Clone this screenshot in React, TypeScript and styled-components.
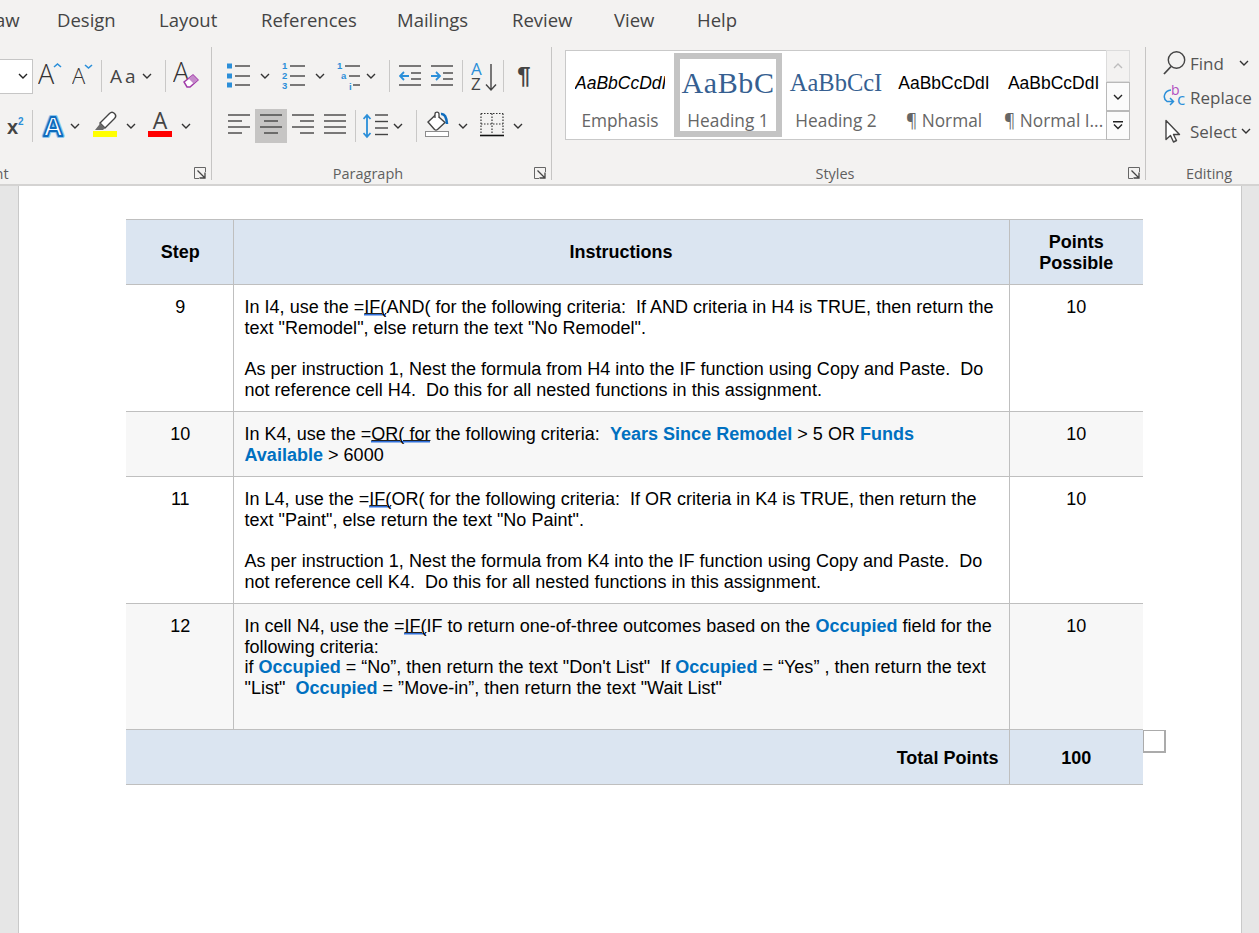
import React from 'react'
import styled, { createGlobalStyle } from 'styled-components'

const GlobalStyle = createGlobalStyle`
  html, body {
    margin: 0;
    padding: 0;
    height: 100%;
    overflow: hidden;
    background: #e6e6e6;
  }
  * { box-sizing: border-box; }
`

const Screen = styled.div`
  display: flex;
  flex-direction: column;
  width: 1259px;
  height: 933px;
  overflow: hidden;
  font-family: "Open Sans", "Noto Sans", sans-serif;
`

const Ribbon = styled.header`
  flex: none;
  height: 186px;
  background: #f3f2f1;
  border-bottom: 2px solid #d4d3d2;
`

const TabBar = styled.nav`
  display: flex;
  height: 47px;
  margin-left: -26px;
  font-size: 18.5px;
  line-height: 39px;
  color: #444;
`

const Tab = styled.span<{ $w: number }>`
  flex: 0 0 ${p => p.$w}px;
`

const Groups = styled.div`
  display: flex;
  height: 133px;
`

const Group = styled.section<{ $w?: number; $last?: boolean }>`
  display: flex;
  flex-direction: column;
  flex: ${p => (p.$w ? `0 0 ${p.$w}px` : '1')};
  border-right: ${p => (p.$last ? 'none' : '1px solid #c6c5c4')};
`

const Rows = styled.div`
  display: flex;
  flex-direction: column;
  flex: 1;
  gap: 16px;
  padding-top: 12px;
`

const Row = styled.div`
  display: flex;
  align-items: center;
  height: 34px;
`

const Slot = styled.div<{ $w: number; $ml?: number; $active?: boolean }>`
  display: flex;
  flex: 0 0 ${p => p.$w}px;
  align-items: center;
  justify-content: center;
  height: 34px;
  margin-left: ${p => p.$ml ?? 0}px;
  background: ${p => (p.$active ? '#c6c5c4' : 'transparent')};
  color: #444;
`

const Divider = styled.div<{ $ml: number }>`
  flex: 0 0 1px;
  height: 32px;
  margin-left: ${p => p.$ml}px;
  background: #c9c8c7;
`

const SizeBox = styled.div`
  display: flex;
  flex: 0 0 33px;
  align-items: center;
  justify-content: flex-end;
  height: 35px;
  padding-right: 4px;
  background: #fff;
  border: 1px solid #c6c6c6;
  border-left: none;
`

const CaseText = styled.span`
  font-size: 19px;
  letter-spacing: 3px;
  white-space: nowrap;
  color: #444;
`

const Pilcrow = styled.span`
  font-family: "Liberation Sans", sans-serif;
  font-size: 24px;
  font-weight: 700;
  color: #444;
`

const LabelRow = styled.div<{ $pl?: number }>`
  display: flex;
  align-items: center;
  height: 18px;
  margin-bottom: -2px;
  padding-left: ${p => p.$pl ?? 0}px;
`

const GroupLabel = styled.div<{ $ml?: number }>`
  flex: 1;
  margin-left: ${p => p.$ml ?? 0}px;
  padding-top: 2px;
  font-size: 14.5px;
  line-height: 18px;
  text-align: center;
  white-space: nowrap;
  color: #5f5f5f;
`

const Launcher = styled.div`
  display: flex;
  flex: 0 0 12px;
  margin: 0 5px 0 10px;
`

const StyleArea = styled.div`
  display: flex;
  flex: 1;
  align-items: flex-start;
  padding: 3px 0 0 13px;
`

const Gallery = styled.div`
  display: flex;
  width: 542px;
  height: 90px;
  padding: 2px 0;
  background: #fff;
  border: 1px solid #c9c9c9;
`

const StyleItem = styled.div<{ $selected?: boolean }>`
  display: flex;
  flex: 0 0 108px;
  flex-direction: column;
  align-items: center;
  border: 6px solid ${p => (p.$selected ? '#c4c4c4' : 'transparent')};
`

const Preview = styled.div<{ $kind: 'emphasis' | 'h1' | 'h2' | 'normal' }>`
  display: flex;
  flex: none;
  align-items: center;
  justify-content: ${p => (p.$kind === 'emphasis' ? 'flex-start' : 'center')};
  width: ${p => (p.$kind === 'emphasis' ? 90 : 96)}px;
  height: 48px;
  overflow: hidden;
  white-space: nowrap;
  color: ${p => (p.$kind === 'h1' || p.$kind === 'h2' ? '#365f91' : '#000')};
  font-family: ${p => (p.$kind === 'h1' || p.$kind === 'h2' ? '"Liberation Serif", serif' : '"Liberation Sans", sans-serif')};
  font-style: ${p => (p.$kind === 'emphasis' ? 'italic' : 'normal')};
  font-size: ${p => (p.$kind === 'h1' ? 30 : p.$kind === 'h2' ? 24.5 : 17.5)}px;
  letter-spacing: ${p => (p.$kind === 'h1' ? '0.6px' : '0')};
`

const StyleName = styled.div`
  flex: none;
  margin-top: 3px;
  font-size: 17.3px;
  line-height: 22px;
  white-space: nowrap;
  color: #666;
`

const Scroller = styled.div`
  display: flex;
  flex: 0 0 23px;
  flex-direction: column;
  height: 90px;
`

const ScrollButton = styled.div<{ $h: number; $muted?: boolean }>`
  display: flex;
  flex: 0 0 ${p => p.$h}px;
  align-items: center;
  justify-content: center;
  margin-left: -1px;
  background: ${p => (p.$muted ? '#f3f2f1' : '#fbfbfb')};
  border: 1px solid ${p => (p.$muted ? '#dcdcdc' : '#b9b9b9')};
`

const EditList = styled.div`
  display: flex;
  flex: 1;
  flex-direction: column;
  padding-left: 17px;
`

const EditRow = styled.div<{ $h: number }>`
  display: flex;
  align-items: center;
  gap: 4px;
  height: ${p => p.$h}px;
  font-size: 17px;
  color: #555;
`

const EditChevron = styled.span<{ $ml: number }>`
  display: flex;
  margin-left: ${p => p.$ml}px;
`

const DocArea = styled.main`
  flex: 1;
  padding: 0 17px 0 18px;
  background: #e6e6e6;
  overflow: hidden;
`

const Page = styled.div`
  height: 100%;
  padding: 33px 0 0 107px;
  background: #fff;
  border-left: 1px solid #c9c9c9;
  border-right: 1px solid #c9c9c9;
`

const TableWrap = styled.div`
  position: relative;
  width: 1017px;
`

const Table = styled.table`
  width: 1017px;
  table-layout: fixed;
  border-collapse: collapse;
  font-family: "Liberation Sans", Arial, sans-serif;
  font-size: 18px;
  line-height: 20.7px;
  letter-spacing: 0.015px;
  color: #000;
`

const Head = styled.tr<{ $h: number }>`
  height: ${p => p.$h}px;
  background: #dbe5f1;
`

const BodyRow = styled.tr<{ $h: number; $alt?: boolean }>`
  height: ${p => p.$h}px;
  background: ${p => (p.$alt ? '#f7f7f7' : '#fff')};
`

const Cell = styled.td`
  padding: 12px 15px 0 11px;
  border-top: 1px solid #bfbfbf;
  border-bottom: 1px solid #bfbfbf;
  border-left: 1px solid #bfbfbf;
  vertical-align: top;
  white-space: pre-wrap;
`

const NumberCell = styled(Cell)`
  padding: 12px 0 0;
  text-align: center;
  &:first-child {
    padding-left: 2px;
    border-left: none;
  }
`

const HeadCell = styled.th<{ $right?: boolean; $pt?: number }>`
  padding: ${p => p.$pt ?? 1}px ${p => (p.$right ? 10 : 0)}px 0 0;
  border-top: 1px solid #bfbfbf;
  border-bottom: 1px solid #bfbfbf;
  border-left: 1px solid #bfbfbf;
  font-weight: 700;
  vertical-align: middle;
  text-align: ${p => (p.$right ? 'right' : 'center')};
  &:first-child {
    padding-left: ${p => (p.$right ? 0 : 2)}px;
    border-left: none;
  }
`

const Field = styled.b`
  color: #0070c0;
`

const Flagged = styled.span`
  text-decoration: underline #222 1px;
  text-underline-offset: 0;
  background: linear-gradient(#2f6fdb, #2f6fdb) no-repeat 0 calc(100% - 2px) / 100% 1.5px;
`

const RowHandle = styled.div`
  position: absolute;
  right: -23px;
  bottom: 32px;
  width: 23px;
  height: 23px;
  background: #fff;
  border: 2px solid #ababab;
  border-width: 1px 2px 2px 1px;
`

const DARK = '#444'
const BLUE = '#2b8fd9'

const Chevron = ({ color = '#333' }: { color?: string }) => (
  <svg width="10" height="6" viewBox="0 0 10 6">
    <path d="M1 1l4 4 4-4" fill="none" stroke={color} strokeWidth="1.4" />
  </svg>
)

const Chev = ({ ml }: { ml: number }) => (
  <Slot $w={10} $ml={ml}>
    <Chevron />
  </Slot>
)

const Lines = ({ rows }: { rows: [number, number, number][] }) => (
  <>
    {rows.map(([x1, x2, y]) => (
      <line key={`${x1}-${y}`} x1={x1} x2={x2} y1={y} y2={y} stroke={DARK} strokeWidth="1.4" />
    ))}
  </>
)

const Draw = ({ w, children }: { w: number; children: React.ReactNode }) => (
  <svg width={w} height={34} viewBox={`0 0 ${w} 34`}>
    {children}
  </svg>
)

const GrowA = () => (
  <Draw w={24}>
    <text x="0" y="25" fontFamily="Open Sans" fontSize="27" fontWeight="300" fill="#333">A</text>
    <path d="M16 8l3.500-3 3.500 3" fill="none" stroke={BLUE} strokeWidth="1.6" />
  </Draw>
)

const ShrinkA = () => (
  <Draw w={22}>
    <text x="0" y="25" fontFamily="Open Sans" fontSize="22" fontWeight="300" fill="#333">A</text>
    <path d="M13 6l3.500 3 3.500-3" fill="none" stroke={BLUE} strokeWidth="1.6" />
  </Draw>
)

const ClearFormat = () => (
  <Draw w={26}>
    <text x="0" y="23" fontFamily="Open Sans" fontSize="27" fontWeight="300" fill="#333">A</text>
    <path d="M11 23l9-7 5 5-8 7h-3z" fill="#fff" stroke="#a03aa8" strokeWidth="1.5" />
    <path d="M15.500 19.500l5 5 4.500-3.500-5-5z" fill="#c58acb" />
  </Draw>
)

const Superscript = () => (
  <Draw w={17}>
    <text x="0" y="25" fontFamily="Liberation Sans" fontSize="20" fontWeight="700" fill={DARK}>x</text>
    <text x="11" y="16" fontFamily="Liberation Sans" fontSize="10" fontWeight="700" fill={BLUE}>2</text>
  </Draw>
)

const TextEffect = () => (
  <Draw w={24}>
    <text x="12" y="27" textAnchor="middle" fontFamily="Liberation Sans" fontSize="28" fontWeight="700" fill="#fff" stroke="#8cc4ec" strokeWidth="4" strokeLinejoin="round">A</text>
    <text x="12" y="27" textAnchor="middle" fontFamily="Liberation Sans" fontSize="28" fontWeight="700" fill="#fff" stroke="#0f6cbd" strokeWidth="1.8" strokeLinejoin="round">A</text>
  </Draw>
)

const Highlighter = () => (
  <Draw w={24}>
    <rect x="0" y="22" width="24" height="6" fill="#ffff00" />
    <path d="M7 14l9.500-9.500c1.500-1.500 3.500-1.500 5 0s1.500 3.500 0 5L12 19z" fill="#fff" stroke={DARK} strokeWidth="1.4" />
    <path d="M7 14l5 5-2 2H2l4-5z" fill="#6b6b6b" />
  </Draw>
)

const FontColor = () => (
  <Draw w={24}>
    <text x="12" y="20" textAnchor="middle" fontFamily="Open Sans" fontSize="23" fill={DARK}>A</text>
    <rect x="0" y="22" width="24" height="6" fill="#ff0000" />
  </Draw>
)

const Bullets = () => (
  <Draw w={24}>
    {[7, 17, 26].map(y => (
      <rect key={y} x="0" y={y - 2.5} width="5" height="5" fill={BLUE} />
    ))}
    <Lines rows={[[8, 23, 7], [8, 23, 17], [8, 23, 26]]} />
  </Draw>
)

const Marker = ({ x, y, children }: { x: number; y: number; children: string }) => (
  <text x={x} y={y} fontFamily="Liberation Sans" fontSize="9.500" fontWeight="700" fill={BLUE}>{children}</text>
)

const Numbered = () => (
  <Draw w={24}>
    <Marker x={0} y={10}>1</Marker>
    <Marker x={0} y={20}>2</Marker>
    <Marker x={0} y={30}>3</Marker>
    <Lines rows={[[8, 23, 7], [8, 23, 17], [8, 23, 26]]} />
  </Draw>
)

const Multilevel = () => (
  <Draw w={24}>
    <Marker x={0} y={10}>1</Marker>
    <Marker x={4} y={20}>a</Marker>
    <Marker x={12} y={31}>i</Marker>
    <Lines rows={[[8, 23, 7], [12, 23, 17], [16, 23, 26]]} />
  </Draw>
)

const Outdent = () => (
  <Draw w={23}>
    <Lines rows={[[0, 22, 7], [12, 22, 14], [12, 22, 20], [0, 22, 26]]} />
    <path d="M10 17H1M5 13l-4 4 4 4" fill="none" stroke={BLUE} strokeWidth="1.8" />
  </Draw>
)

const Indent = () => (
  <Draw w={23}>
    <Lines rows={[[0, 22, 7], [12, 22, 14], [12, 22, 20], [0, 22, 26]]} />
    <path d="M0 17h9M5 13l4 4-4 4" fill="none" stroke={BLUE} strokeWidth="1.8" />
  </Draw>
)

const Sort = () => (
  <Draw w={26}>
    <text x="0" y="16" fontFamily="Open Sans" fontSize="17" fill={BLUE}>A</text>
    <text x="0" y="31" fontFamily="Open Sans" fontSize="17" fill={DARK}>Z</text>
    <path d="M20 5v26M15 25.500l5 5.500 5-5.500" fill="none" stroke={DARK} strokeWidth="1.4" />
  </Draw>
)

const AlignIcon = ({ rows }: { rows: [number, number, number][] }) => (
  <svg width="22" height="34" viewBox="0 0 22 34">
    <Lines rows={rows} />
  </svg>
)

const LineSpacing = () => (
  <Draw w={26}>
    <path d="M4 6v22M0.500 10L4 6l3.500 4M0.500 24L4 28l3.500-4" fill="none" stroke={BLUE} strokeWidth="1.8" />
    <Lines rows={[[12, 25, 6], [12, 25, 12.500], [12, 25, 19], [12, 25, 25.500]]} />
  </Draw>
)

const Shading = () => (
  <Draw w={25}>
    <path d="M3 13l8-7.500 9 8-7.500 7c-1 .8-2 .8-3 0z" fill="#fff" stroke={DARK} strokeWidth="1.4" />
    <path d="M10 9V5c0-2.500 4-2.500 4 0v4" fill="#fff" stroke={DARK} strokeWidth="1.3" />
    <path d="M16 5c3.500-.5 5.500 3 6 10" fill="none" stroke="#0f6cbd" strokeWidth="2.6" />
    <rect x="0.500" y="22.500" width="23" height="5" fill="#fff" stroke="#8c8c8c" />
  </Draw>
)

const Borders = () => (
  <Draw w={24}>
    <path d="M1 4.500h22M1 4.500v21M23 4.500v21M12 4.500v21M1 15h22" fill="none" stroke="#333" strokeWidth="1.2" strokeDasharray="1.500 1.500" />
    <line x1="0" x2="24" y1="26.500" y2="26.500" stroke="#111" strokeWidth="1.6" />
  </Draw>
)

const DialogMark = () => (
  <svg width="12" height="12" viewBox="0 0 12 12">
    <path d="M11.500 5V.5H.5V11.500H5" fill="none" stroke="#666" strokeWidth="1" />
    <path d="M3.500 3.500l7 7M11 5.500V11H5.500" fill="none" stroke="#444" strokeWidth="1.3" />
  </svg>
)

const FindIcon = () => (
  <svg width="23" height="25" viewBox="0 0 23 25">
    <circle cx="13.500" cy="9" r="8.200" fill="none" stroke={DARK} strokeWidth="1.4" />
    <path d="M8 15.500L1 23" stroke={DARK} strokeWidth="1.8" />
  </svg>
)

const ReplaceIcon = () => (
  <svg width="23" height="25" viewBox="0 0 23 25">
    <text x="8" y="10" fontFamily="Open Sans" fontSize="14" fill="#b04fc0">b</text>
    <text x="14" y="20" fontFamily="Open Sans" fontSize="17" fill={BLUE}>c</text>
    <path d="M8 5C1.500 5.500 -1 13 4 16.500h6M7 13l3.500 3.500L7 20" fill="none" stroke={BLUE} strokeWidth="1.5" />
  </svg>
)

const SelectIcon = () => (
  <svg width="23" height="25" viewBox="0 0 23 25">
    <path d="M3 1.500v19l4.500-4 3 6.500 3-1.500-3-6h6z" fill="#fff" stroke={DARK} strokeWidth="1.4" strokeLinejoin="round" />
  </svg>
)

const ALIGN_LEFT: [number, number, number][] = [[0, 22, 6], [0, 14, 12], [0, 22, 18], [0, 14, 24]]
const ALIGN_CENTER: [number, number, number][] = [[0, 22, 6], [4, 18, 12], [0, 22, 18], [4, 18, 24]]
const ALIGN_RIGHT: [number, number, number][] = [[0, 22, 6], [8, 22, 12], [0, 22, 18], [8, 22, 24]]
const ALIGN_JUSTIFY: [number, number, number][] = [[0, 22, 6], [0, 22, 12], [0, 22, 18], [0, 22, 24]]

const tabs: [string, number][] = [
  ['Draw', 83],
  ['Design', 102],
  ['Layout', 102],
  ['References', 136],
  ['Mailings', 115],
  ['Review', 102],
  ['View', 83],
  ['Help', 60],
]

const styleItems: { sample: string; name: string; kind: 'emphasis' | 'h1' | 'h2' | 'normal'; selected?: boolean }[] = [
  { sample: 'AaBbCcDdI', name: 'Emphasis', kind: 'emphasis' },
  { sample: 'AaBbC', name: 'Heading 1', kind: 'h1', selected: true },
  { sample: 'AaBbCcI', name: 'Heading 2', kind: 'h2' },
  { sample: 'AaBbCcDdI', name: '¶ Normal', kind: 'normal' },
  { sample: 'AaBbCcDdI', name: '¶ Normal I...', kind: 'normal' },
]

const App = () => {
  return (
    <Screen>
      <GlobalStyle />
      <Ribbon>
        <TabBar>
          {tabs.map(([t, w]) => (
            <Tab key={t} $w={w}>{t}</Tab>
          ))}
        </TabBar>
        <Groups>
          <Group $w={212}>
            <Rows>
              <Row>
                <SizeBox>
                  <Chevron color="#222" />
                </SizeBox>
                <Slot $w={24} $ml={5}><GrowA /></Slot>
                <Slot $w={22} $ml={10}><ShrinkA /></Slot>
                <Divider $ml={7} />
                <Slot $w={26} $ml={8}><CaseText>Aa</CaseText></Slot>
                <Chev ml={3} />
                <Divider $ml={13} />
                <Slot $w={26} $ml={7}><ClearFormat /></Slot>
              </Row>
              <Row>
                <Slot $w={17} $ml={7}><Superscript /></Slot>
                <Divider $ml={8} />
                <Slot $w={24} $ml={8}><TextEffect /></Slot>
                <Chev ml={5} />
                <Slot $w={24} $ml={13}><Highlighter /></Slot>
                <Chev ml={9} />
                <Slot $w={24} $ml={12}><FontColor /></Slot>
                <Chev ml={9} />
              </Row>
            </Rows>
            <LabelRow>
              <GroupLabel $ml={-197}>Font</GroupLabel>
              <Launcher><DialogMark /></Launcher>
            </LabelRow>
          </Group>
          <Group $w={340}>
            <Rows>
              <Row>
                <Slot $w={24} $ml={15}><Bullets /></Slot>
                <Chev ml={9} />
                <Slot $w={24} $ml={12}><Numbered /></Slot>
                <Chev ml={9} />
                <Slot $w={24} $ml={12}><Multilevel /></Slot>
                <Chev ml={5} />
                <Divider $ml={13} />
                <Slot $w={23} $ml={9}><Outdent /></Slot>
                <Slot $w={23} $ml={9}><Indent /></Slot>
                <Divider $ml={8} />
                <Slot $w={26} $ml={8}><Sort /></Slot>
                <Divider $ml={6} />
                <Slot $w={16} $ml={12}><Pilcrow>¶</Pilcrow></Slot>
              </Row>
              <Row>
                <Slot $w={22} $ml={16}><AlignIcon rows={ALIGN_LEFT} /></Slot>
                <Slot $w={32} $ml={5} $active><AlignIcon rows={ALIGN_CENTER} /></Slot>
                <Slot $w={22} $ml={5}><AlignIcon rows={ALIGN_RIGHT} /></Slot>
                <Slot $w={22} $ml={10}><AlignIcon rows={ALIGN_JUSTIFY} /></Slot>
                <Divider $ml={9} />
                <Slot $w={26} $ml={7}><LineSpacing /></Slot>
                <Chev ml={4} />
                <Divider $ml={13} />
                <Slot $w={25} $ml={8}><Shading /></Slot>
                <Chev ml={8} />
                <Slot $w={24} $ml={12}><Borders /></Slot>
                <Chev ml={9} />
              </Row>
            </Rows>
            <LabelRow>
              <GroupLabel>Paragraph</GroupLabel>
              <Launcher><DialogMark /></Launcher>
            </LabelRow>
          </Group>
          <Group $w={594}>
            <StyleArea>
              <Gallery>
                {styleItems.map(s => (
                  <StyleItem key={s.name} $selected={s.selected}>
                    <Preview $kind={s.kind}>{s.sample}</Preview>
                    <StyleName>{s.name}</StyleName>
                  </StyleItem>
                ))}
              </Gallery>
              <Scroller>
                <ScrollButton $h={32} $muted>
                  <svg width="10" height="6" viewBox="0 0 10 6">
                    <path d="M1 5l4-4 4 4" fill="none" stroke="#bdbdbd" strokeWidth="1.4" />
                  </svg>
                </ScrollButton>
                <ScrollButton $h={29}>
                  <Chevron color="#222" />
                </ScrollButton>
                <ScrollButton $h={29}>
                  <svg width="12" height="9" viewBox="0 0 12 9">
                    <path d="M1 .7h10M2 3.500l4 4 4-4" fill="none" stroke="#222" strokeWidth="1.4" />
                  </svg>
                </ScrollButton>
              </Scroller>
            </StyleArea>
            <LabelRow>
              <GroupLabel>Styles</GroupLabel>
              <Launcher><DialogMark /></Launcher>
            </LabelRow>
          </Group>
          <Group $last>
            <EditList>
              <EditRow $h={32}>
                <FindIcon /><span>Find</span>
                <EditChevron $ml={11}><Chevron /></EditChevron>
              </EditRow>
              <EditRow $h={36}>
                <ReplaceIcon /><span>Replace</span>
              </EditRow>
              <EditRow $h={32}>
                <SelectIcon /><span>Select</span>
                <EditChevron $ml={0}><Chevron /></EditChevron>
              </EditRow>
            </EditList>
            <LabelRow $pl={13}>
              <GroupLabel>Editing</GroupLabel>
            </LabelRow>
          </Group>
        </Groups>
      </Ribbon>
      <DocArea>
        <Page>
          <TableWrap>
            <Table>
              <colgroup>
                <col width="107" />
                <col width="776" />
                <col width="134" />
              </colgroup>
              <tbody>
                <Head $h={65}>
                  <HeadCell>Step</HeadCell>
                  <HeadCell>Instructions</HeadCell>
                  <HeadCell>Points<br />Possible</HeadCell>
                </Head>
                <BodyRow $h={127}>
                  <NumberCell>9</NumberCell>
                  <Cell>
                    In I4, use the =<Flagged>IF(</Flagged>AND( for the following criteria:  If AND criteria in H4 is TRUE, then return the text "Remodel", else return the text "No Remodel".
                    <br /><br />
                    As per instruction 1, Nest the formula from H4 into the IF function using Copy and Paste.  Do not reference cell H4.  Do this for all nested functions in this assignment.
                  </Cell>
                  <NumberCell>10</NumberCell>
                </BodyRow>
                <BodyRow $h={65} $alt>
                  <NumberCell>10</NumberCell>
                  <Cell>
                    In K4, use the =<Flagged>OR( for</Flagged> the following criteria:  <Field>Years Since Remodel</Field> &gt; 5 OR <Field>Funds Available</Field> &gt; 6000
                  </Cell>
                  <NumberCell>10</NumberCell>
                </BodyRow>
                <BodyRow $h={127}>
                  <NumberCell>11</NumberCell>
                  <Cell>
                    In L4, use the =<Flagged>IF(</Flagged>OR( for the following criteria:  If OR criteria in K4 is TRUE, then return the text "Paint", else return the text "No Paint".
                    <br /><br />
                    As per instruction 1, Nest the formula from K4 into the IF function using Copy and Paste.  Do not reference cell K4.  Do this for all nested functions in this assignment.
                  </Cell>
                  <NumberCell>10</NumberCell>
                </BodyRow>
                <BodyRow $h={126} $alt>
                  <NumberCell>12</NumberCell>
                  <Cell>
                    In cell N4, use the =<Flagged>IF(</Flagged>IF to return one-of-three outcomes based on the <Field>Occupied</Field> field for the following criteria:
                    <br />
                    if <Field>Occupied</Field> = “No”, then return the text "Don't List"  If <Field>Occupied</Field> = “Yes” , then return the text "List"  <Field>Occupied</Field> = ”Move-in”, then return the text "Wait List"
                  </Cell>
                  <NumberCell>10</NumberCell>
                </BodyRow>
                <Head $h={55}>
                  <HeadCell $right $pt={3} colSpan={2}>Total Points</HeadCell>
                  <HeadCell $pt={3}>100</HeadCell>
                </Head>
              </tbody>
            </Table>
            <RowHandle />
          </TableWrap>
        </Page>
      </DocArea>
    </Screen>
  )
}

export default App
